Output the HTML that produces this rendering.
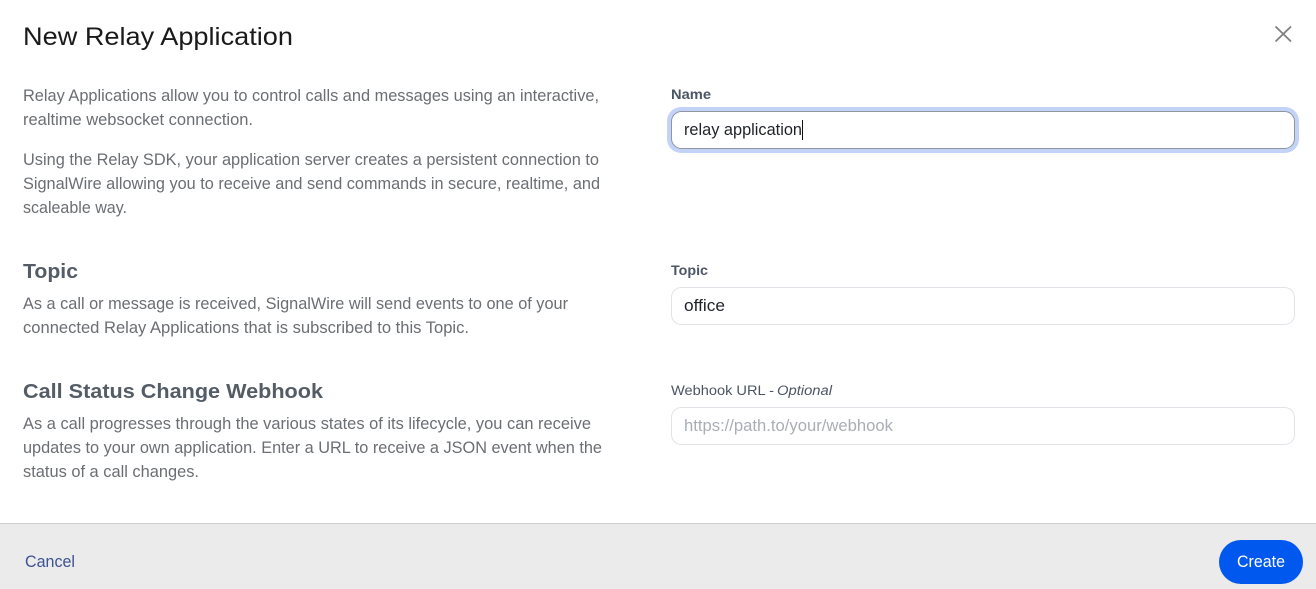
<!DOCTYPE html>
<html>
<head>
<meta charset="utf-8">
<style>
html,body{margin:0;padding:0;background:#fff;width:1316px;height:589px;overflow:hidden}
svg{display:block}
text{font-family:"Liberation Sans",sans-serif}
.b{font-size:16.5px;fill:#6b6e72}
.h{font-size:20.5px;font-weight:700;fill:#545c66}
.l{font-size:13.5px;fill:#4b5563}
.i{font-size:16.5px;fill:#1f2329}
</style>
</head>
<body>
<svg width="1316" height="589" viewBox="0 0 1316 589" xmlns="http://www.w3.org/2000/svg">
<rect width="1316" height="589" fill="#fff"/>
<text x="23" y="45" font-size="25" fill="#1a1a1a" textLength="270" lengthAdjust="spacingAndGlyphs">New Relay Application</text>
<path d="M1275.5 26.5L1291 41.5M1291 26.5L1275.5 41.5" stroke="#808080" stroke-width="1.8" fill="none"/>

<text class="b" x="23" y="101" textLength="576" lengthAdjust="spacingAndGlyphs">Relay Applications allow you to control calls and messages using an interactive,</text>
<text class="b" x="23" y="125" textLength="230" lengthAdjust="spacingAndGlyphs">realtime websocket connection.</text>
<text class="b" x="23" y="165" textLength="576" lengthAdjust="spacingAndGlyphs">Using the Relay SDK, your application server creates a persistent connection to</text>
<text class="b" x="23" y="189" textLength="577" lengthAdjust="spacingAndGlyphs">SignalWire allowing you to receive and send commands in secure, realtime, and</text>
<text class="b" x="23" y="213" textLength="104" lengthAdjust="spacingAndGlyphs">scaleable way.</text>

<text class="h" x="23" y="278" textLength="55" lengthAdjust="spacingAndGlyphs">Topic</text>
<text class="b" x="23" y="309" textLength="545" lengthAdjust="spacingAndGlyphs">As a call or message is received, SignalWire will send events to one of your</text>
<text class="b" x="23" y="333" textLength="446" lengthAdjust="spacingAndGlyphs">connected Relay Applications that is subscribed to this Topic.</text>

<text class="h" x="23" y="398" textLength="300" lengthAdjust="spacingAndGlyphs">Call Status Change Webhook</text>
<text class="b" x="23" y="429" textLength="568" lengthAdjust="spacingAndGlyphs">As a call progresses through the various states of its lifecycle, you can receive</text>
<text class="b" x="23" y="453" textLength="579" lengthAdjust="spacingAndGlyphs">updates to your own application. Enter a URL to receive a JSON event when the</text>
<text class="b" x="23" y="477" textLength="176" lengthAdjust="spacingAndGlyphs">status of a call changes.</text>

<text class="l" x="671" y="99" font-weight="700" textLength="40" lengthAdjust="spacingAndGlyphs">Name</text>
<rect x="667" y="107" width="632" height="46" rx="14" fill="#c3d3f7"/>
<rect x="671.5" y="111.5" width="623" height="37" rx="10" fill="#fff" stroke="#8f95a3" stroke-width="1"/>
<text class="i" x="684" y="135" textLength="118" lengthAdjust="spacingAndGlyphs">relay application</text>
<rect x="802" y="120" width="1" height="20" fill="#111"/>

<text class="l" x="671" y="275" font-weight="700" textLength="37" lengthAdjust="spacingAndGlyphs">Topic</text>
<rect x="671.5" y="287.5" width="623" height="37" rx="10" fill="#fff" stroke="#e0e3e8" stroke-width="1"/>
<text class="i" x="684" y="311" textLength="41" lengthAdjust="spacingAndGlyphs">office</text>

<text class="l" x="671" y="395" textLength="103" lengthAdjust="spacingAndGlyphs">Webhook URL -</text>
<text class="l" x="777" y="395" font-style="italic" textLength="55" lengthAdjust="spacingAndGlyphs">Optional</text>
<rect x="671.5" y="407.5" width="623" height="37" rx="10" fill="#fff" stroke="#e0e3e8" stroke-width="1"/>
<text x="684" y="431" font-size="16.5" fill="#a9aeb6" textLength="209" lengthAdjust="spacingAndGlyphs">https://path.to/your/webhook</text>

<rect x="0" y="523" width="1316" height="66" fill="#ebebeb"/>
<rect x="0" y="523" width="1316" height="1" fill="#cdcdcd"/>
<text x="25" y="567" font-size="16.5" fill="#3d5291" textLength="50" lengthAdjust="spacingAndGlyphs">Cancel</text>
<rect x="1219" y="540" width="84" height="44" rx="22" fill="#0058ee"/>
<text x="1237" y="567" font-size="16.5" fill="#fff" textLength="48" lengthAdjust="spacingAndGlyphs">Create</text>
</svg>
</body>
</html>
